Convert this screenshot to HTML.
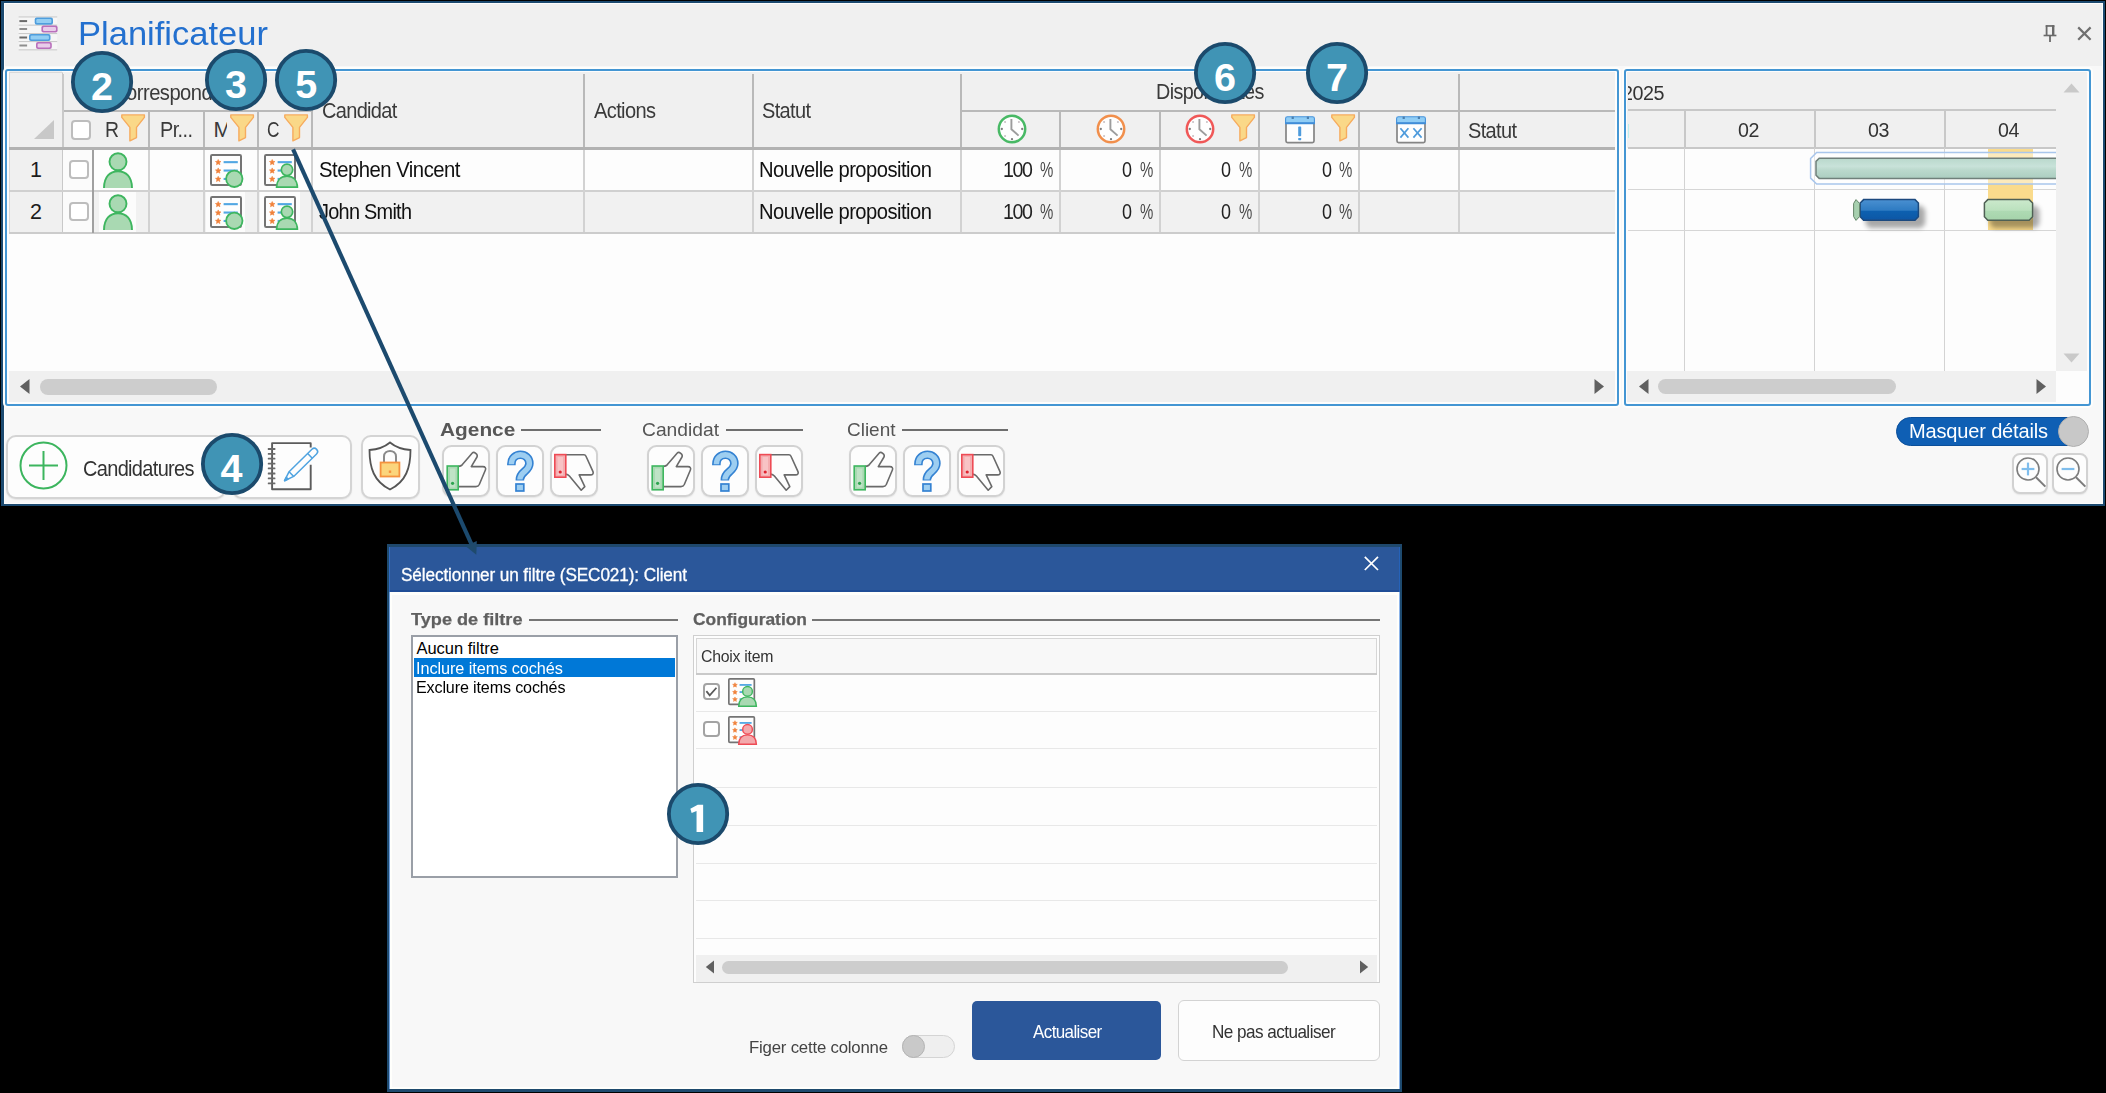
<!DOCTYPE html>
<html><head><meta charset="utf-8"><title>Planificateur</title>
<style>
html,body{margin:0;padding:0;}
body{width:2106px;height:1093px;background:#000;position:relative;overflow:hidden;font-family:"Liberation Sans",sans-serif;}
div,svg,span.t{position:absolute;box-sizing:border-box;}
span.t{white-space:pre;}
svg{overflow:visible;}
</style></head><body>
<div style="left:1px;top:1px;width:2104px;height:505px;background:#f0f0f0;border-style:solid;border-color:#1c4a70;border-width:2px 2px 2px 3px;box-shadow:inset 0 0 0 1px rgba(255,255,255,0.85);"></div>
<div style="left:5px;top:66px;width:2097px;height:437px;background:#f8f8f8;"></div>
<svg style="left:0px;top:0px;" width="70" height="60" viewBox="0 0 70 60"><rect x="18.6" y="16.4" width="38.6" height="34" fill="#f6f6f6"/><rect x="18.6" y="16.4" width="38.6" height="1.1" fill="#cbcbcb"/><rect x="18.6" y="24.6" width="38.6" height="1.1" fill="#cbcbcb"/><rect x="18.6" y="33.0" width="38.6" height="1.1" fill="#cbcbcb"/><rect x="18.6" y="41.0" width="38.6" height="1.1" fill="#cbcbcb"/><rect x="18.6" y="49.3" width="38.6" height="1.1" fill="#cbcbcb"/><rect x="19.4" y="20.1" width="7.7" height="2" fill="#6a6a6a"/><rect x="34.7" y="17.5" width="18.299999999999997" height="7.2" rx="2" fill="#4f9edd"/><rect x="36.300000000000004" y="19.1" width="15.099999999999998" height="4" rx="1.2" fill="#93cef3"/><rect x="19.4" y="28.0" width="7.7" height="2" fill="#8e8e8e"/><rect x="41.4" y="25.4" width="16.200000000000003" height="7.2" rx="2" fill="#b970bc"/><rect x="43.0" y="27.0" width="13.000000000000004" height="4" rx="1.2" fill="#e9cdea"/><rect x="19.4" y="36.5" width="7.7" height="2" fill="#6a6a6a"/><rect x="29.0" y="33.9" width="21.5" height="7.2" rx="2" fill="#4f9edd"/><rect x="30.6" y="35.5" width="18.3" height="4" rx="1.2" fill="#93cef3"/><rect x="19.4" y="44.5" width="7.7" height="2" fill="#8e8e8e"/><rect x="36.0" y="41.9" width="15.799999999999997" height="7.2" rx="2" fill="#b970bc"/><rect x="37.6" y="43.5" width="12.599999999999998" height="4" rx="1.2" fill="#e9cdea"/></svg>
<span class="t" style="left:77.50px;top:17.00px;font-size:33.5px;line-height:33.5px;color:#2370cf;transform:scaleX(1.0306);transform-origin:0 0;">Planificateur</span>
<svg style="left:2040px;top:22px;" width="20" height="24" viewBox="0 0 20 24"><path d="M6.6 3.6 L6.6 13 M12.9 3.6 L12.9 13" stroke="#6a6a6a" fill="none" stroke-width="1.8"/><rect x="5.7" y="3.1" width="8.7" height="1.7" fill="#6a6a6a"/><rect x="12" y="3.5" width="2.4" height="9.5" fill="#6a6a6a"/><rect x="3.6" y="12.7" width="12.8" height="1.6" fill="#6a6a6a"/><rect x="9.1" y="14" width="1.8" height="6" fill="#6a6a6a"/></svg>
<svg style="left:2074px;top:23px;" width="20" height="20" viewBox="0 0 20 20"><path d="M4.2 4.4 L16.6 16.8 M16.6 4.4 L4.2 16.8" stroke="#707070" stroke-width="2.2" fill="none"/></svg>
<div style="left:5px;top:69px;width:1614px;height:337px;background:#fdfdfd;border:2px solid #4496d3;border-radius:3px;box-shadow:0 0 0 2px #fefefc;"></div>
<div style="left:9px;top:72px;width:1606px;height:76px;background:#f0f0f0;"></div>
<div style="left:9px;top:71px;width:53px;height:162px;background:#f0f0f0;"></div>
<div style="left:62px;top:72px;width:1px;height:161px;background:#c9c9c9;"></div>
<div style="left:9px;top:72px;width:1px;height:161px;background:#dadada;"></div>
<div style="left:9px;top:72px;width:54px;height:1px;background:#dadada;"></div>
<svg style="left:33px;top:119px;" width="22" height="21" viewBox="0 0 22 21"><path d="M1 20 L21 20 L21 1 Z" fill="#c8c8c8"/></svg>
<div style="left:64px;top:110px;width:247px;height:2px;background:#b9b9b9;"></div>
<div style="left:960px;top:110px;width:655px;height:2px;background:#b9b9b9;"></div>
<div style="left:9px;top:147px;width:1606px;height:3px;background:#b2b2b2;"></div>
<div style="left:148px;top:112px;width:2px;height:35px;background:#b9b9b9;"></div>
<div style="left:203px;top:112px;width:2px;height:35px;background:#b9b9b9;"></div>
<div style="left:257px;top:112px;width:2px;height:35px;background:#b9b9b9;"></div>
<div style="left:311px;top:112px;width:2px;height:35px;background:#b9b9b9;"></div>
<div style="left:311px;top:74px;width:2px;height:73px;background:#b9b9b9;"></div>
<div style="left:583px;top:74px;width:2px;height:73px;background:#b9b9b9;"></div>
<div style="left:752px;top:74px;width:2px;height:73px;background:#b9b9b9;"></div>
<div style="left:960px;top:74px;width:2px;height:73px;background:#b9b9b9;"></div>
<div style="left:1458px;top:74px;width:2px;height:73px;background:#b9b9b9;"></div>
<div style="left:1059px;top:112px;width:2px;height:35px;background:#b9b9b9;"></div>
<div style="left:1159px;top:112px;width:2px;height:35px;background:#b9b9b9;"></div>
<div style="left:1258px;top:112px;width:2px;height:35px;background:#b9b9b9;"></div>
<div style="left:1358px;top:112px;width:2px;height:35px;background:#b9b9b9;"></div>
<div style="left:63px;top:74px;width:1px;height:73px;background:#c9c9c9;"></div>
<div style="left:63px;top:150px;width:1552px;height:40px;background:#fdfdfd;"></div>
<div style="left:63px;top:192px;width:1552px;height:40px;background:#f1f1f1;"></div>
<div style="left:63px;top:150px;width:29px;height:82px;background:#fbfbfb;"></div>
<div style="left:99px;top:192px;width:37px;height:40px;background:#fcfcfc;"></div>
<div style="left:206px;top:192px;width:39px;height:40px;background:#fcfcfc;"></div>
<div style="left:260px;top:192px;width:40px;height:40px;background:#fcfcfc;"></div>
<div style="left:9px;top:190px;width:1606px;height:2px;background:#d0d0d0;"></div>
<div style="left:9px;top:232px;width:1606px;height:2px;background:#cccccc;"></div>
<div style="left:148px;top:150px;width:2px;height:82px;background:#d2d2d2;"></div>
<div style="left:203px;top:150px;width:2px;height:82px;background:#d2d2d2;"></div>
<div style="left:257px;top:150px;width:2px;height:82px;background:#d2d2d2;"></div>
<div style="left:311px;top:150px;width:2px;height:82px;background:#d2d2d2;"></div>
<div style="left:583px;top:150px;width:2px;height:82px;background:#d2d2d2;"></div>
<div style="left:752px;top:150px;width:2px;height:82px;background:#d2d2d2;"></div>
<div style="left:960px;top:150px;width:2px;height:82px;background:#d2d2d2;"></div>
<div style="left:1059px;top:150px;width:2px;height:82px;background:#d2d2d2;"></div>
<div style="left:1159px;top:150px;width:2px;height:82px;background:#d2d2d2;"></div>
<div style="left:1258px;top:150px;width:2px;height:82px;background:#d2d2d2;"></div>
<div style="left:1358px;top:150px;width:2px;height:82px;background:#d2d2d2;"></div>
<div style="left:1458px;top:150px;width:2px;height:82px;background:#d2d2d2;"></div>
<div style="left:92px;top:150px;width:2px;height:83px;background:#a0a0a0;"></div>
<span class="t" style="left:30.02px;top:160.00px;font-size:21.5px;line-height:21.5px;color:#1c1c1c;">1</span>
<span class="t" style="left:30.02px;top:202.00px;font-size:21.5px;line-height:21.5px;color:#1c1c1c;">2</span>
<div style="left:70.5px;top:120px;width:20px;height:20px;background:#fff;border:2px solid #bdbdbd;border-radius:4px;"></div>
<span class="t" style="left:104.70px;top:120.00px;font-size:21.5px;line-height:21.5px;color:#3a3a3a;transform:scaleX(0.9014);transform-origin:0 0;">R</span>
<svg style="left:121px;top:114.2px;" width="24" height="27.6" viewBox="0 0 24 27.6"><path d="M0.8 0.9 L23.4 0.9 L23.4 3.4 L15.5 13.4 L15.5 23.6 L8.9 26.9 L8.9 13.4 L0.8 3.4 Z" fill="#fad888" stroke="#f6ab5e" stroke-width="1.4" stroke-linejoin="round"/></svg>
<span class="t" style="left:159.50px;top:120.00px;font-size:21.5px;line-height:21.5px;color:#3a3a3a;letter-spacing:-0.637px;transform:scaleX(0.9247);transform-origin:0 0;">Pr...</span>
<div style="left:205px;top:115px;width:22px;height:30px;overflow:hidden;"><span class="t" style="left:8.50px;top:5.00px;font-size:21.5px;line-height:21.5px;color:#3a3a3a;">M</span></div>
<svg style="left:230px;top:114.2px;" width="24" height="27.6" viewBox="0 0 24 27.6"><path d="M0.8 0.9 L23.4 0.9 L23.4 3.4 L15.5 13.4 L15.5 23.6 L8.9 26.9 L8.9 13.4 L0.8 3.4 Z" fill="#fad888" stroke="#f6ab5e" stroke-width="1.4" stroke-linejoin="round"/></svg>
<span class="t" style="left:267.30px;top:120.00px;font-size:21.5px;line-height:21.5px;color:#3a3a3a;transform:scaleX(0.8048);transform-origin:0 0;">C</span>
<svg style="left:284px;top:114.2px;" width="24" height="27.6" viewBox="0 0 24 27.6"><path d="M0.8 0.9 L23.4 0.9 L23.4 3.4 L15.5 13.4 L15.5 23.6 L8.9 26.9 L8.9 13.4 L0.8 3.4 Z" fill="#fad888" stroke="#f6ab5e" stroke-width="1.4" stroke-linejoin="round"/></svg>
<span class="t" style="left:112.00px;top:83.00px;font-size:21.5px;line-height:21.5px;color:#3a3a3a;letter-spacing:-0.569px;transform:scaleX(0.9398);transform-origin:0 0;">Correspond...</span>
<span class="t" style="left:321.50px;top:101.00px;font-size:21.5px;line-height:21.5px;color:#3a3a3a;letter-spacing:-0.744px;transform:scaleX(0.9311);transform-origin:0 0;">Candidat</span>
<span class="t" style="left:593.80px;top:101.00px;font-size:21.5px;line-height:21.5px;color:#3a3a3a;letter-spacing:-0.684px;transform:scaleX(0.9336);transform-origin:0 0;">Actions</span>
<span class="t" style="left:762.00px;top:101.00px;font-size:21.5px;line-height:21.5px;color:#3a3a3a;letter-spacing:-0.696px;transform:scaleX(0.9296);transform-origin:0 0;">Statut</span>
<span class="t" style="left:1155.70px;top:82.00px;font-size:21.5px;line-height:21.5px;color:#3a3a3a;letter-spacing:-0.691px;transform:scaleX(0.9202);transform-origin:0 0;">Disponibilités</span>
<span class="t" style="left:1468.40px;top:121.00px;font-size:21.5px;line-height:21.5px;color:#3a3a3a;letter-spacing:-0.696px;transform:scaleX(0.9296);transform-origin:0 0;">Statut</span>
<svg style="left:995.8px;top:112.80000000000001px;" width="32" height="32" viewBox="0 0 32 32"><circle cx="16" cy="16" r="13.2" fill="#fefefe" stroke="#48b965" stroke-width="2.5"/><path d="M15.4 6 L15.4 16.2 L22.6 22.6" fill="none" stroke="#9c9c9c" stroke-width="1.9" stroke-linejoin="round"/><circle cx="22.93" cy="9.07" r="1.05" fill="#c8c0c4"/><circle cx="26.20" cy="16.00" r="1.15" fill="#7f7f7f"/><circle cx="16.00" cy="26.20" r="1.15" fill="#7f7f7f"/><circle cx="9.07" cy="22.93" r="1.05" fill="#c8c0c4"/><circle cx="5.80" cy="16.00" r="1.15" fill="#7f7f7f"/><circle cx="9.07" cy="9.07" r="1.05" fill="#c8c0c4"/></svg>
<svg style="left:1095.2px;top:112.80000000000001px;" width="32" height="32" viewBox="0 0 32 32"><circle cx="16" cy="16" r="13.2" fill="#fefefe" stroke="#f18f4c" stroke-width="2.5"/><path d="M15.4 6 L15.4 16.2 L22.6 22.6" fill="none" stroke="#9c9c9c" stroke-width="1.9" stroke-linejoin="round"/><circle cx="22.93" cy="9.07" r="1.05" fill="#c8c0c4"/><circle cx="26.20" cy="16.00" r="1.15" fill="#7f7f7f"/><circle cx="16.00" cy="26.20" r="1.15" fill="#7f7f7f"/><circle cx="9.07" cy="22.93" r="1.05" fill="#c8c0c4"/><circle cx="5.80" cy="16.00" r="1.15" fill="#7f7f7f"/><circle cx="9.07" cy="9.07" r="1.05" fill="#c8c0c4"/></svg>
<svg style="left:1183.8px;top:112.80000000000001px;" width="32" height="32" viewBox="0 0 32 32"><circle cx="16" cy="16" r="13.2" fill="#fefefe" stroke="#f05858" stroke-width="2.5"/><path d="M15.4 6 L15.4 16.2 L22.6 22.6" fill="none" stroke="#9c9c9c" stroke-width="1.9" stroke-linejoin="round"/><circle cx="22.93" cy="9.07" r="1.05" fill="#c8c0c4"/><circle cx="26.20" cy="16.00" r="1.15" fill="#7f7f7f"/><circle cx="16.00" cy="26.20" r="1.15" fill="#7f7f7f"/><circle cx="9.07" cy="22.93" r="1.05" fill="#c8c0c4"/><circle cx="5.80" cy="16.00" r="1.15" fill="#7f7f7f"/><circle cx="9.07" cy="9.07" r="1.05" fill="#c8c0c4"/></svg>
<svg style="left:1231px;top:114.2px;" width="24" height="27.6" viewBox="0 0 24 27.6"><path d="M0.8 0.9 L23.4 0.9 L23.4 3.4 L15.5 13.4 L15.5 23.6 L8.9 26.9 L8.9 13.4 L0.8 3.4 Z" fill="#fad888" stroke="#f6ab5e" stroke-width="1.4" stroke-linejoin="round"/></svg>
<svg style="left:1284.9px;top:115.7px;" width="30" height="28" viewBox="0 0 30 28"><path d="M1 4 L1 25 Q1 26.6 2.6 26.6 L27.4 26.6 Q29 26.6 29 25 L29 4 Z" fill="#fefefe" stroke="#858585" stroke-width="1.7"/><path d="M0.6 7.6 L0.6 2.6 Q0.6 0.8 2.4 0.8 L27.6 0.8 Q29.4 0.8 29.4 2.6 L29.4 7.6 Z" fill="#90cdf5" stroke="#4593dc" stroke-width="1.1"/><rect x="0.6" y="6.2" width="28.8" height="1.5" fill="#3f8ad6"/><rect x="6.6" y="0.6" width="2.2" height="2.4" fill="#4a7fb0"/><rect x="21.8" y="0.6" width="2.2" height="2.4" fill="#4a7fb0"/><rect x="13.2" y="10.6" width="3" height="9.6" rx="0.8" fill="#4e9bdc"/><rect x="13.2" y="22" width="3" height="2.2" rx="0.6" fill="#4e9bdc"/></svg>
<svg style="left:1330.6px;top:114.2px;" width="24" height="27.6" viewBox="0 0 24 27.6"><path d="M0.8 0.9 L23.4 0.9 L23.4 3.4 L15.5 13.4 L15.5 23.6 L8.9 26.9 L8.9 13.4 L0.8 3.4 Z" fill="#fad888" stroke="#f6ab5e" stroke-width="1.4" stroke-linejoin="round"/></svg>
<svg style="left:1395.5px;top:115.7px;" width="30" height="28" viewBox="0 0 30 28"><path d="M1 4 L1 25 Q1 26.6 2.6 26.6 L27.4 26.6 Q29 26.6 29 25 L29 4 Z" fill="#fefefe" stroke="#858585" stroke-width="1.7"/><path d="M0.6 7.6 L0.6 2.6 Q0.6 0.8 2.4 0.8 L27.6 0.8 Q29.4 0.8 29.4 2.6 L29.4 7.6 Z" fill="#90cdf5" stroke="#4593dc" stroke-width="1.1"/><rect x="0.6" y="6.2" width="28.8" height="1.5" fill="#3f8ad6"/><rect x="6.6" y="0.6" width="2.2" height="2.4" fill="#4a7fb0"/><rect x="21.8" y="0.6" width="2.2" height="2.4" fill="#4a7fb0"/><path d="M4.4 12.2 L12.4 21.6 M12.4 12.2 L4.4 21.6 M17.4 12.2 L25.6 21.6 M25.6 12.2 L17.4 21.6" stroke="#4e9bdc" stroke-width="1.7" fill="none"/></svg>
<div style="left:69px;top:159.5px;width:19.5px;height:19.5px;background:#fff;border:2px solid #bdbdbd;border-radius:4px;"></div>
<svg style="left:102.7px;top:151.5px;overflow:hidden;" width="30.0" height="36.0" viewBox="0 0 30 36"><circle cx="15" cy="9.8" r="8.5" fill="#a9d9b2" stroke="#3eb65f" stroke-width="1.9"/><path d="M1 36 C1 25 7 19.2 15 19.2 C23 19.2 29 25 29 36 Z" fill="#a9d9b2"/><path d="M1 36 C1 25 7 19.2 15 19.2 C23 19.2 29 25 29 36" fill="none" stroke="#3eb65f" stroke-width="1.9"/></svg>
<svg style="left:209.7px;top:153.8px;" width="34.0" height="34.0" viewBox="0 0 34 34"><rect x="1" y="1" width="30" height="30" rx="1.2" fill="#fdfdfd" stroke="#747474" stroke-width="2"/><path d="M8.20 5.50 L8.99 7.31 L10.96 7.50 L9.48 8.82 L9.90 10.75 L8.20 9.75 L6.50 10.75 L6.92 8.82 L5.44 7.50 L7.41 7.31 Z" fill="#f0813a" stroke="#f0813a" stroke-width="0.6" stroke-linejoin="round"/><rect x="13.6" y="7.1" width="14.2" height="2.1" fill="#52a7e3"/><path d="M8.20 13.90 L8.99 15.71 L10.96 15.90 L9.48 17.22 L9.90 19.15 L8.20 18.15 L6.50 19.15 L6.92 17.22 L5.44 15.90 L7.41 15.71 Z" fill="#f0813a" stroke="#f0813a" stroke-width="0.6" stroke-linejoin="round"/><rect x="13.6" y="15.500000000000002" width="14.2" height="2.1" fill="#52a7e3"/><path d="M8.20 22.30 L8.99 24.11 L10.96 24.30 L9.48 25.62 L9.90 27.55 L8.20 26.55 L6.50 27.55 L6.92 25.62 L5.44 24.30 L7.41 24.11 Z" fill="#f0813a" stroke="#f0813a" stroke-width="0.6" stroke-linejoin="round"/><rect x="13.6" y="23.9" width="14.2" height="2.1" fill="#52a7e3"/><circle cx="24.3" cy="24.8" r="8.2" fill="#a9d9b2" stroke="#3eb65f" stroke-width="1.8"/></svg>
<svg style="left:263.8px;top:153.8px;" width="34.0" height="34.0" viewBox="0 0 34 34"><rect x="1" y="1" width="30" height="30" rx="1.2" fill="#fdfdfd" stroke="#747474" stroke-width="2"/><path d="M8.20 5.50 L8.99 7.31 L10.96 7.50 L9.48 8.82 L9.90 10.75 L8.20 9.75 L6.50 10.75 L6.92 8.82 L5.44 7.50 L7.41 7.31 Z" fill="#f0813a" stroke="#f0813a" stroke-width="0.6" stroke-linejoin="round"/><rect x="13.6" y="7.1" width="14.2" height="2.1" fill="#52a7e3"/><path d="M8.20 13.90 L8.99 15.71 L10.96 15.90 L9.48 17.22 L9.90 19.15 L8.20 18.15 L6.50 19.15 L6.92 17.22 L5.44 15.90 L7.41 15.71 Z" fill="#f0813a" stroke="#f0813a" stroke-width="0.6" stroke-linejoin="round"/><rect x="13.6" y="15.500000000000002" width="14.2" height="2.1" fill="#52a7e3"/><path d="M8.20 22.30 L8.99 24.11 L10.96 24.30 L9.48 25.62 L9.90 27.55 L8.20 26.55 L6.50 27.55 L6.92 25.62 L5.44 24.30 L7.41 24.11 Z" fill="#f0813a" stroke="#f0813a" stroke-width="0.6" stroke-linejoin="round"/><rect x="13.6" y="23.9" width="14.2" height="2.1" fill="#52a7e3"/><circle cx="23" cy="15.8" r="5.7" fill="#a9d9b2" stroke="#3eb65f" stroke-width="1.7"/><path d="M12.6 33.2 C12.8 26 17 22.2 23 22.2 C29 22.2 33.2 26 33.4 33.2 Z" fill="#a9d9b2" stroke="#3eb65f" stroke-width="1.7"/></svg>
<span class="t" style="left:319.00px;top:160.00px;font-size:21.5px;line-height:21.5px;color:#111;letter-spacing:-0.541px;transform:scaleX(0.9444);transform-origin:0 0;">Stephen Vincent</span>
<span class="t" style="left:758.50px;top:160.00px;font-size:21.5px;line-height:21.5px;color:#111;letter-spacing:-0.551px;transform:scaleX(0.9384);transform-origin:0 0;">Nouvelle proposition</span>
<span class="t" style="left:1039.90px;top:160.00px;font-size:21.5px;line-height:21.5px;color:#4a4a4a;transform:scaleX(0.6954);transform-origin:0 0;">%</span>
<span class="t" style="left:1002.70px;top:160.00px;font-size:21.5px;line-height:21.5px;color:#222;letter-spacing:-1.453px;transform:scaleX(0.9099);transform-origin:0 0;">100</span>
<span class="t" style="left:1139.50px;top:160.00px;font-size:21.5px;line-height:21.5px;color:#4a4a4a;transform:scaleX(0.6954);transform-origin:0 0;">%</span>
<span class="t" style="left:1122.30px;top:160.00px;font-size:21.5px;line-height:21.5px;color:#222;transform:scaleX(0.8355);transform-origin:0 0;">0</span>
<span class="t" style="left:1238.50px;top:160.00px;font-size:21.5px;line-height:21.5px;color:#4a4a4a;transform:scaleX(0.6954);transform-origin:0 0;">%</span>
<span class="t" style="left:1221.30px;top:160.00px;font-size:21.5px;line-height:21.5px;color:#222;transform:scaleX(0.8355);transform-origin:0 0;">0</span>
<span class="t" style="left:1339.10px;top:160.00px;font-size:21.5px;line-height:21.5px;color:#4a4a4a;transform:scaleX(0.6954);transform-origin:0 0;">%</span>
<span class="t" style="left:1321.90px;top:160.00px;font-size:21.5px;line-height:21.5px;color:#222;transform:scaleX(0.8355);transform-origin:0 0;">0</span>
<div style="left:69px;top:201.5px;width:19.5px;height:19.5px;background:#fff;border:2px solid #bdbdbd;border-radius:4px;"></div>
<svg style="left:102.7px;top:193.5px;overflow:hidden;" width="30.0" height="36.0" viewBox="0 0 30 36"><circle cx="15" cy="9.8" r="8.5" fill="#a9d9b2" stroke="#3eb65f" stroke-width="1.9"/><path d="M1 36 C1 25 7 19.2 15 19.2 C23 19.2 29 25 29 36 Z" fill="#a9d9b2"/><path d="M1 36 C1 25 7 19.2 15 19.2 C23 19.2 29 25 29 36" fill="none" stroke="#3eb65f" stroke-width="1.9"/></svg>
<svg style="left:209.7px;top:195.8px;" width="34.0" height="34.0" viewBox="0 0 34 34"><rect x="1" y="1" width="30" height="30" rx="1.2" fill="#fdfdfd" stroke="#747474" stroke-width="2"/><path d="M8.20 5.50 L8.99 7.31 L10.96 7.50 L9.48 8.82 L9.90 10.75 L8.20 9.75 L6.50 10.75 L6.92 8.82 L5.44 7.50 L7.41 7.31 Z" fill="#f0813a" stroke="#f0813a" stroke-width="0.6" stroke-linejoin="round"/><rect x="13.6" y="7.1" width="14.2" height="2.1" fill="#52a7e3"/><path d="M8.20 13.90 L8.99 15.71 L10.96 15.90 L9.48 17.22 L9.90 19.15 L8.20 18.15 L6.50 19.15 L6.92 17.22 L5.44 15.90 L7.41 15.71 Z" fill="#f0813a" stroke="#f0813a" stroke-width="0.6" stroke-linejoin="round"/><rect x="13.6" y="15.500000000000002" width="14.2" height="2.1" fill="#52a7e3"/><path d="M8.20 22.30 L8.99 24.11 L10.96 24.30 L9.48 25.62 L9.90 27.55 L8.20 26.55 L6.50 27.55 L6.92 25.62 L5.44 24.30 L7.41 24.11 Z" fill="#f0813a" stroke="#f0813a" stroke-width="0.6" stroke-linejoin="round"/><rect x="13.6" y="23.9" width="14.2" height="2.1" fill="#52a7e3"/><circle cx="24.3" cy="24.8" r="8.2" fill="#a9d9b2" stroke="#3eb65f" stroke-width="1.8"/></svg>
<svg style="left:263.8px;top:195.8px;" width="34.0" height="34.0" viewBox="0 0 34 34"><rect x="1" y="1" width="30" height="30" rx="1.2" fill="#fdfdfd" stroke="#747474" stroke-width="2"/><path d="M8.20 5.50 L8.99 7.31 L10.96 7.50 L9.48 8.82 L9.90 10.75 L8.20 9.75 L6.50 10.75 L6.92 8.82 L5.44 7.50 L7.41 7.31 Z" fill="#f0813a" stroke="#f0813a" stroke-width="0.6" stroke-linejoin="round"/><rect x="13.6" y="7.1" width="14.2" height="2.1" fill="#52a7e3"/><path d="M8.20 13.90 L8.99 15.71 L10.96 15.90 L9.48 17.22 L9.90 19.15 L8.20 18.15 L6.50 19.15 L6.92 17.22 L5.44 15.90 L7.41 15.71 Z" fill="#f0813a" stroke="#f0813a" stroke-width="0.6" stroke-linejoin="round"/><rect x="13.6" y="15.500000000000002" width="14.2" height="2.1" fill="#52a7e3"/><path d="M8.20 22.30 L8.99 24.11 L10.96 24.30 L9.48 25.62 L9.90 27.55 L8.20 26.55 L6.50 27.55 L6.92 25.62 L5.44 24.30 L7.41 24.11 Z" fill="#f0813a" stroke="#f0813a" stroke-width="0.6" stroke-linejoin="round"/><rect x="13.6" y="23.9" width="14.2" height="2.1" fill="#52a7e3"/><circle cx="23" cy="15.8" r="5.7" fill="#a9d9b2" stroke="#3eb65f" stroke-width="1.7"/><path d="M12.6 33.2 C12.8 26 17 22.2 23 22.2 C29 22.2 33.2 26 33.4 33.2 Z" fill="#a9d9b2" stroke="#3eb65f" stroke-width="1.7"/></svg>
<span class="t" style="left:319.00px;top:202.00px;font-size:21.5px;line-height:21.5px;color:#111;letter-spacing:-0.787px;transform:scaleX(0.9255);transform-origin:0 0;">John Smith</span>
<span class="t" style="left:758.50px;top:202.00px;font-size:21.5px;line-height:21.5px;color:#111;letter-spacing:-0.551px;transform:scaleX(0.9384);transform-origin:0 0;">Nouvelle proposition</span>
<span class="t" style="left:1039.90px;top:202.00px;font-size:21.5px;line-height:21.5px;color:#4a4a4a;transform:scaleX(0.6954);transform-origin:0 0;">%</span>
<span class="t" style="left:1002.70px;top:202.00px;font-size:21.5px;line-height:21.5px;color:#222;letter-spacing:-1.453px;transform:scaleX(0.9099);transform-origin:0 0;">100</span>
<span class="t" style="left:1139.50px;top:202.00px;font-size:21.5px;line-height:21.5px;color:#4a4a4a;transform:scaleX(0.6954);transform-origin:0 0;">%</span>
<span class="t" style="left:1122.30px;top:202.00px;font-size:21.5px;line-height:21.5px;color:#222;transform:scaleX(0.8355);transform-origin:0 0;">0</span>
<span class="t" style="left:1238.50px;top:202.00px;font-size:21.5px;line-height:21.5px;color:#4a4a4a;transform:scaleX(0.6954);transform-origin:0 0;">%</span>
<span class="t" style="left:1221.30px;top:202.00px;font-size:21.5px;line-height:21.5px;color:#222;transform:scaleX(0.8355);transform-origin:0 0;">0</span>
<span class="t" style="left:1339.10px;top:202.00px;font-size:21.5px;line-height:21.5px;color:#4a4a4a;transform:scaleX(0.6954);transform-origin:0 0;">%</span>
<span class="t" style="left:1321.90px;top:202.00px;font-size:21.5px;line-height:21.5px;color:#222;transform:scaleX(0.8355);transform-origin:0 0;">0</span>
<div style="left:9px;top:371px;width:1606px;height:31px;background:#f0f0f0;"></div>
<svg style="left:19px;top:378px;" width="12" height="17" viewBox="0 0 12 17"><path d="M10.5 1 L10.5 16 L1 8.5 Z" fill="#606060"/></svg>
<div style="left:40px;top:379px;width:177px;height:15.5px;background:#cdcdcd;border-radius:8px;"></div>
<svg style="left:1593px;top:378px;" width="12" height="17" viewBox="0 0 12 17"><path d="M1.5 1 L1.5 16 L11 8.5 Z" fill="#606060"/></svg>
<div style="left:1624px;top:69px;width:467px;height:337px;background:#fdfdfd;border:2px solid #4496d3;border-radius:3px;box-shadow:0 0 0 2px #fefefc;"></div>
<div style="left:1627px;top:72px;width:460px;height:76px;background:#f0f0f0;"></div>
<div style="left:2056px;top:72px;width:31px;height:299px;background:#f0f0f0;"></div>
<div style="left:1627px;top:371px;width:429px;height:31px;background:#f0f0f0;"></div>
<div style="left:1628px;top:109px;width:428px;height:1.6px;background:#c8c8c8;"></div>
<div style="left:1628px;top:147px;width:428px;height:1.6px;background:#c8c8c8;"></div>
<div style="left:1684px;top:111px;width:1px;height:260px;background:#d3d3d3;"></div>
<div style="left:1684px;top:111px;width:1.6px;height:37px;background:#c8c8c8;"></div>
<div style="left:1814px;top:111px;width:1px;height:260px;background:#d3d3d3;"></div>
<div style="left:1814px;top:111px;width:1.6px;height:37px;background:#c8c8c8;"></div>
<div style="left:1944px;top:111px;width:1px;height:260px;background:#d3d3d3;"></div>
<div style="left:1944px;top:111px;width:1.6px;height:37px;background:#c8c8c8;"></div>
<div style="left:1628px;top:189px;width:428px;height:1px;background:#d6d6d6;"></div>
<div style="left:1628px;top:230px;width:428px;height:1px;background:#d6d6d6;"></div>
<div style="left:1628px;top:80px;width:60px;height:26px;overflow:hidden;"><span class="t" style="left:-1.00px;top:3.00px;font-size:20.5px;line-height:20.5px;color:#333;letter-spacing:-0.485px;transform:scaleX(0.9625);transform-origin:0 0;margin-left:-4.8px;">2025</span></div>
<span class="t" style="left:1737.75px;top:120.00px;font-size:20px;line-height:20px;color:#333;letter-spacing:-0.344px;transform:scaleX(0.9815);transform-origin:0 0;">02</span>
<span class="t" style="left:1867.75px;top:120.00px;font-size:20px;line-height:20px;color:#333;letter-spacing:-0.344px;transform:scaleX(0.9815);transform-origin:0 0;">03</span>
<span class="t" style="left:1998.45px;top:120.00px;font-size:20px;line-height:20px;color:#333;letter-spacing:-0.344px;transform:scaleX(0.9815);transform-origin:0 0;">04</span>
<div style="left:1627.6px;top:123.5px;width:1.6px;height:14px;background:#bdeeee;"></div>
<div style="left:1988px;top:149px;width:45px;height:81px;background:#fadb8c;"></div>
<svg style="left:1626px;top:149px;overflow:hidden;" width="430" height="222" viewBox="0 0 430 222"><defs><linearGradient id="gBig" x1="0" y1="0" x2="0" y2="1"><stop offset="0" stop-color="#b9d8cc"/><stop offset="0.4" stop-color="#c8e2d9"/><stop offset="0.6" stop-color="#bad8cc"/><stop offset="1" stop-color="#abcdc0"/></linearGradient><linearGradient id="gBlue" x1="0" y1="0" x2="0" y2="1"><stop offset="0" stop-color="#4a90d1"/><stop offset="0.52" stop-color="#2e7bc2"/><stop offset="0.56" stop-color="#0f60b0"/><stop offset="1" stop-color="#0a57a5"/></linearGradient><linearGradient id="gGreen" x1="0" y1="0" x2="0" y2="1"><stop offset="0" stop-color="#cbe9cc"/><stop offset="0.52" stop-color="#bbe1be"/><stop offset="0.56" stop-color="#aedab3"/><stop offset="1" stop-color="#a5d3aa"/></linearGradient><filter id="sh" x="-20%" y="-40%" width="150%" height="220%"><feGaussianBlur in="SourceAlpha" stdDeviation="2.4"/><feOffset dx="5.5" dy="6.5"/><feComponentTransfer><feFuncA type="linear" slope="0.34"/></feComponentTransfer><feMerge><feMergeNode/><feMergeNode in="SourceGraphic"/></feMerge></filter></defs><path d="M190.6 3.5 L498.6 3.5 L504.6 9.5 L504.6 29.1 L498.6 35.1 L190.6 35.1 L184.6 29.1 L184.6 9.5 Z" fill="rgba(255,255,255,0.42)" stroke="#a9c6ec" stroke-width="1.5"/><path d="M193.2 9.2 L506.8 9.2 L510 12.399999999999999 L510 26.2 L506.8 29.4 L193.2 29.4 L190 26.2 L190 12.399999999999999 Z" fill="url(#gBig)" stroke="#6f7f7a" stroke-width="1.5"/><g filter="url(#sh)"><path d="M237.6 50.6 L289.0 50.6 L292.4 54.0 L292.4 67.8 L289.0 71.2 L237.6 71.2 L234.2 67.8 L234.2 54.0 Z" fill="url(#gBlue)" stroke="#1b4a7e" stroke-width="1.5"/></g><path d="M230 50.6 L233.6 54.5 L233.6 67.5 L230 71.4 L227.6 67.5 L227.6 54.5 Z" fill="#a7d0af" stroke="#648569" stroke-width="1"/><g filter="url(#sh)"><path d="M361.79999999999995 50.6 L403.2 50.6 L406.59999999999997 54.0 L406.59999999999997 67.8 L403.2 71.2 L361.79999999999995 71.2 L358.4 67.8 L358.4 54.0 Z" fill="url(#gGreen)" stroke="#4f6054" stroke-width="1.5"/></g></svg>
<svg style="left:2063px;top:83px;" width="17" height="10" viewBox="0 0 17 10"><path d="M0.5 9.5 L16.5 9.5 L8.5 0.5 Z" fill="#c9c9c9"/></svg>
<svg style="left:2063px;top:352.5px;" width="17" height="10" viewBox="0 0 17 10"><path d="M0.5 0.5 L16.5 0.5 L8.5 9.5 Z" fill="#c9c9c9"/></svg>
<svg style="left:1637.5px;top:378px;" width="12" height="17" viewBox="0 0 12 17"><path d="M10.5 1 L10.5 16 L1 8.5 Z" fill="#606060"/></svg>
<div style="left:1658px;top:378.8px;width:237.5px;height:15.5px;background:#cdcdcd;border-radius:8px;"></div>
<svg style="left:2034.5px;top:378px;" width="12" height="17" viewBox="0 0 12 17"><path d="M1.5 1 L1.5 16 L11 8.5 Z" fill="#606060"/></svg>
<div style="left:6px;top:435px;width:220px;height:64px;background:#fdfdfd;border:2px solid #d4d4d4;border-radius:10px;box-shadow:0 1px 1.5px rgba(0,0,0,0.08);"></div>
<div style="left:232px;top:435px;width:120px;height:64px;background:#fdfdfd;border:2px solid #d4d4d4;border-radius:10px;box-shadow:0 1px 1.5px rgba(0,0,0,0.08);"></div>
<div style="left:360.5px;top:435px;width:59.5px;height:64px;background:#fdfdfd;border:2px solid #d4d4d4;border-radius:10px;box-shadow:0 1px 1.5px rgba(0,0,0,0.08);"></div>
<svg style="left:19px;top:440.5px;" width="49" height="49" viewBox="0 0 49 49"><circle cx="24.5" cy="24.5" r="23" fill="none" stroke="#3cb55e" stroke-width="2"/><path d="M10 24.5 L39 24.5 M24.5 10 L24.5 39" stroke="#3cb55e" stroke-width="2" fill="none"/></svg>
<span class="t" style="left:82.60px;top:459.00px;font-size:21.5px;line-height:21.5px;color:#333;letter-spacing:-0.721px;transform:scaleX(0.9295);transform-origin:0 0;">Candidatures</span>
<svg style="left:0px;top:0px;" width="330" height="500" viewBox="0 0 330 500"><path d="M310.7 447.6 L310.7 443.1 L272.1 443.1 L272.1 489.2 L310.7 489.2 L310.7 464.8" fill="#fdfdfd" stroke="#5c5c5c" stroke-width="1.9" stroke-linejoin="round"/><rect x="267.8" y="448.10" width="7.6" height="1.8" rx="0.5" fill="#6a6a6a"/><rect x="267.8" y="452.95" width="7.6" height="1.8" rx="0.5" fill="#6a6a6a"/><rect x="267.8" y="457.80" width="7.6" height="1.8" rx="0.5" fill="#6a6a6a"/><rect x="267.8" y="462.65" width="7.6" height="1.8" rx="0.5" fill="#6a6a6a"/><rect x="267.8" y="467.50" width="7.6" height="1.8" rx="0.5" fill="#6a6a6a"/><rect x="267.8" y="472.60" width="7.6" height="1.8" rx="0.5" fill="#6a6a6a"/><rect x="267.8" y="477.50" width="7.6" height="1.8" rx="0.5" fill="#6a6a6a"/><rect x="267.8" y="482.40" width="7.6" height="1.8" rx="0.5" fill="#6a6a6a"/><g transform="translate(284.6 480.7) rotate(-44.4)" fill="#fdfdfd" stroke="#4fa3e0" stroke-width="1.5" stroke-linejoin="round"><path d="M0 0 L9.5 -3.3 L41.5 -3.3 A3.3 3.3 0 0 1 41.5 3.3 L9.5 3.3 Z"/><path d="M9.5 -3.3 L9.5 3.3 M35.5 -3.3 L35.5 3.3" fill="none"/><path d="M0 0 L3.6 -1.25 L3.6 1.25 Z" fill="#4fa3e0"/></g></svg>
<svg style="left:368px;top:441px;" width="44" height="50" viewBox="0 0 44 50"><path d="M22 1.5 C28 6.5 35 8.5 42.5 9 C42.5 27 38 40.5 22 48.5 C6 40.5 1.5 27 1.5 9 C9 8.5 16 6.5 22 1.5 Z" fill="#fdfdfd" stroke="#555" stroke-width="1.8"/><path d="M16 22 L16 15.5 C16 8 28 8 28 15.5 L28 22" fill="none" stroke="#8a8a8a" stroke-width="2"/><rect x="12.6" y="21.5" width="18.8" height="14" fill="#fbd57c" stroke="#f5923e" stroke-width="1.8"/><rect x="20.8" y="29.5" width="2.4" height="2.4" fill="#f5923e"/></svg>
<span class="t" style="left:440.00px;top:420.00px;font-size:19.2px;line-height:19.2px;color:#575757;font-weight:bold;transform:scaleX(1.0864);transform-origin:0 0;">Agence</span>
<div style="left:521px;top:428.7px;width:80px;height:2px;background:#6e6e6e;"></div>
<div style="left:442.0px;top:445.3px;width:48.2px;height:52px;background:#fdfdfd;border:2px solid #d2d2d2;border-radius:9.5px;box-shadow:0 1px 1.5px rgba(0,0,0,0.08);"></div>
<svg style="left:442.0px;top:445.3px;" width="48.2" height="52" viewBox="0 0 48.2 52"><path d="M16.5 21.4 C18.5 21.2 19.5 20.6 20.4 19.6 L30.3 8 C32 6.2 36.3 9.2 35 12 L29.3 21.6 L41 21.6 C43.2 21.6 44.2 23.2 43.4 25 L37.3 39.5 C36.6 41 35.4 41.6 33.8 41.6 L16.5 41.6" fill="#fdfdfd" stroke="#6a6a6a" stroke-width="1.6" stroke-linejoin="round"/><rect x="5.2" y="21" width="11" height="23.8" fill="#a9d9b2" stroke="#3eb65f" stroke-width="1.6"/><rect x="8" y="23.5" width="5.4" height="19" fill="#bfe3c6"/><circle cx="10.6" cy="38.3" r="1.6" fill="#2ea44f"/></svg>
<div style="left:496.1px;top:445.3px;width:48.2px;height:52px;background:#fdfdfd;border:2px solid #d2d2d2;border-radius:9.5px;box-shadow:0 1px 1.5px rgba(0,0,0,0.08);"></div>
<svg style="left:496.1px;top:445.3px;" width="48.2" height="52" viewBox="0 0 48.2 52"><path d="M15.4 20.2 L15.4 19 C15.4 6.8 33.4 6.8 33.4 18.6 C33.4 26.5 23.9 26.2 23.9 34.6 L23.9 35.6" fill="none" stroke="#3482d2" stroke-width="8.6"/><path d="M15.4 19.2 L15.4 19 C15.4 6.8 33.4 6.8 33.4 18.6 C33.4 26.5 23.9 26.2 23.9 34.6" fill="none" stroke="#9dcef1" stroke-width="5.4"/><rect x="20" y="39" width="7.8" height="7" fill="#9dcef1" stroke="#3482d2" stroke-width="1.7"/></svg>
<div style="left:550.3px;top:445.3px;width:48.2px;height:52px;background:#fdfdfd;border:2px solid #d2d2d2;border-radius:9.5px;box-shadow:0 1px 1.5px rgba(0,0,0,0.08);"></div>
<svg style="left:550.3px;top:445.3px;" width="48.2" height="52" viewBox="0 0 48.2 52"><path d="M15.7 9.8 L34 9.8 C35 9.8 35.6 10.3 36 11.2 L43 26.6 C43.8 28.6 42.6 29.9 40.6 29.9 L29.2 29.9 L34.8 41.6 L31.2 45.2 L19.4 31 C18.4 29.9 17.2 29.3 15.7 29.1" fill="#fdfdfd" stroke="#6a6a6a" stroke-width="1.6" stroke-linejoin="round"/><rect x="4.8" y="9.6" width="11" height="22.6" fill="#f4adb0" stroke="#ee4b55" stroke-width="1.6"/><rect x="7.6" y="12" width="5.4" height="18" fill="#f8c3c5"/><circle cx="10.2" cy="27" r="1.6" fill="#e0232e"/></svg>
<span class="t" style="left:642.30px;top:421.00px;font-size:18.5px;line-height:18.5px;color:#555;transform:scaleX(1.0397);transform-origin:0 0;">Candidat</span>
<div style="left:726px;top:428.7px;width:77.20000000000005px;height:2px;background:#6e6e6e;"></div>
<div style="left:646.6px;top:445.3px;width:48.2px;height:52px;background:#fdfdfd;border:2px solid #d2d2d2;border-radius:9.5px;box-shadow:0 1px 1.5px rgba(0,0,0,0.08);"></div>
<svg style="left:646.6px;top:445.3px;" width="48.2" height="52" viewBox="0 0 48.2 52"><path d="M16.5 21.4 C18.5 21.2 19.5 20.6 20.4 19.6 L30.3 8 C32 6.2 36.3 9.2 35 12 L29.3 21.6 L41 21.6 C43.2 21.6 44.2 23.2 43.4 25 L37.3 39.5 C36.6 41 35.4 41.6 33.8 41.6 L16.5 41.6" fill="#fdfdfd" stroke="#6a6a6a" stroke-width="1.6" stroke-linejoin="round"/><rect x="5.2" y="21" width="11" height="23.8" fill="#a9d9b2" stroke="#3eb65f" stroke-width="1.6"/><rect x="8" y="23.5" width="5.4" height="19" fill="#bfe3c6"/><circle cx="10.6" cy="38.3" r="1.6" fill="#2ea44f"/></svg>
<div style="left:700.7px;top:445.3px;width:48.2px;height:52px;background:#fdfdfd;border:2px solid #d2d2d2;border-radius:9.5px;box-shadow:0 1px 1.5px rgba(0,0,0,0.08);"></div>
<svg style="left:700.7px;top:445.3px;" width="48.2" height="52" viewBox="0 0 48.2 52"><path d="M15.4 20.2 L15.4 19 C15.4 6.8 33.4 6.8 33.4 18.6 C33.4 26.5 23.9 26.2 23.9 34.6 L23.9 35.6" fill="none" stroke="#3482d2" stroke-width="8.6"/><path d="M15.4 19.2 L15.4 19 C15.4 6.8 33.4 6.8 33.4 18.6 C33.4 26.5 23.9 26.2 23.9 34.6" fill="none" stroke="#9dcef1" stroke-width="5.4"/><rect x="20" y="39" width="7.8" height="7" fill="#9dcef1" stroke="#3482d2" stroke-width="1.7"/></svg>
<div style="left:754.9px;top:445.3px;width:48.2px;height:52px;background:#fdfdfd;border:2px solid #d2d2d2;border-radius:9.5px;box-shadow:0 1px 1.5px rgba(0,0,0,0.08);"></div>
<svg style="left:754.9px;top:445.3px;" width="48.2" height="52" viewBox="0 0 48.2 52"><path d="M15.7 9.8 L34 9.8 C35 9.8 35.6 10.3 36 11.2 L43 26.6 C43.8 28.6 42.6 29.9 40.6 29.9 L29.2 29.9 L34.8 41.6 L31.2 45.2 L19.4 31 C18.4 29.9 17.2 29.3 15.7 29.1" fill="#fdfdfd" stroke="#6a6a6a" stroke-width="1.6" stroke-linejoin="round"/><rect x="4.8" y="9.6" width="11" height="22.6" fill="#f4adb0" stroke="#ee4b55" stroke-width="1.6"/><rect x="7.6" y="12" width="5.4" height="18" fill="#f8c3c5"/><circle cx="10.2" cy="27" r="1.6" fill="#e0232e"/></svg>
<span class="t" style="left:846.50px;top:421.00px;font-size:18.5px;line-height:18.5px;color:#555;transform:scaleX(1.0251);transform-origin:0 0;">Client</span>
<div style="left:901.6px;top:428.7px;width:106.39999999999998px;height:2px;background:#6e6e6e;"></div>
<div style="left:848.8px;top:445.3px;width:48.2px;height:52px;background:#fdfdfd;border:2px solid #d2d2d2;border-radius:9.5px;box-shadow:0 1px 1.5px rgba(0,0,0,0.08);"></div>
<svg style="left:848.8px;top:445.3px;" width="48.2" height="52" viewBox="0 0 48.2 52"><path d="M16.5 21.4 C18.5 21.2 19.5 20.6 20.4 19.6 L30.3 8 C32 6.2 36.3 9.2 35 12 L29.3 21.6 L41 21.6 C43.2 21.6 44.2 23.2 43.4 25 L37.3 39.5 C36.6 41 35.4 41.6 33.8 41.6 L16.5 41.6" fill="#fdfdfd" stroke="#6a6a6a" stroke-width="1.6" stroke-linejoin="round"/><rect x="5.2" y="21" width="11" height="23.8" fill="#a9d9b2" stroke="#3eb65f" stroke-width="1.6"/><rect x="8" y="23.5" width="5.4" height="19" fill="#bfe3c6"/><circle cx="10.6" cy="38.3" r="1.6" fill="#2ea44f"/></svg>
<div style="left:902.9px;top:445.3px;width:48.2px;height:52px;background:#fdfdfd;border:2px solid #d2d2d2;border-radius:9.5px;box-shadow:0 1px 1.5px rgba(0,0,0,0.08);"></div>
<svg style="left:902.9px;top:445.3px;" width="48.2" height="52" viewBox="0 0 48.2 52"><path d="M15.4 20.2 L15.4 19 C15.4 6.8 33.4 6.8 33.4 18.6 C33.4 26.5 23.9 26.2 23.9 34.6 L23.9 35.6" fill="none" stroke="#3482d2" stroke-width="8.6"/><path d="M15.4 19.2 L15.4 19 C15.4 6.8 33.4 6.8 33.4 18.6 C33.4 26.5 23.9 26.2 23.9 34.6" fill="none" stroke="#9dcef1" stroke-width="5.4"/><rect x="20" y="39" width="7.8" height="7" fill="#9dcef1" stroke="#3482d2" stroke-width="1.7"/></svg>
<div style="left:957.0999999999999px;top:445.3px;width:48.2px;height:52px;background:#fdfdfd;border:2px solid #d2d2d2;border-radius:9.5px;box-shadow:0 1px 1.5px rgba(0,0,0,0.08);"></div>
<svg style="left:957.0999999999999px;top:445.3px;" width="48.2" height="52" viewBox="0 0 48.2 52"><path d="M15.7 9.8 L34 9.8 C35 9.8 35.6 10.3 36 11.2 L43 26.6 C43.8 28.6 42.6 29.9 40.6 29.9 L29.2 29.9 L34.8 41.6 L31.2 45.2 L19.4 31 C18.4 29.9 17.2 29.3 15.7 29.1" fill="#fdfdfd" stroke="#6a6a6a" stroke-width="1.6" stroke-linejoin="round"/><rect x="4.8" y="9.6" width="11" height="22.6" fill="#f4adb0" stroke="#ee4b55" stroke-width="1.6"/><rect x="7.6" y="12" width="5.4" height="18" fill="#f8c3c5"/><circle cx="10.2" cy="27" r="1.6" fill="#e0232e"/></svg>
<div style="left:1896px;top:417px;width:192px;height:28.5px;background:#0f5fb4;border-radius:14.5px;border:1px solid #0b4f9a;"></div>
<span class="t" style="left:1908.50px;top:421.00px;font-size:20.5px;line-height:20.5px;color:#fff;letter-spacing:-0.188px;transform:scaleX(0.9783);transform-origin:0 0;">Masquer détails</span>
<div style="left:2057.5px;top:416px;width:31px;height:31px;background:#c8c8c8;border-radius:50%;border:1.5px solid #b0b0b0;"></div>
<div style="left:2011.5px;top:452.8px;width:36.6px;height:41px;background:#fdfdfd;border:2px solid #d2d2d2;border-radius:8px;box-shadow:0 1px 1.5px rgba(0,0,0,0.08);"></div>
<svg style="left:2011.5px;top:452.8px;" width="36.6" height="41" viewBox="0 0 36.6 41"><circle cx="16" cy="16" r="11" fill="#fdfdfd" stroke="#7c7c7c" stroke-width="1.6"/><path d="M24 24.2 L33.4 33.6" stroke="#7c7c7c" stroke-width="2"/><path d="M9.6 16 L22.4 16" stroke="#7fbdec" stroke-width="2.2"/><path d="M16 9.6 L16 22.4" stroke="#7fbdec" stroke-width="2.2"/></svg>
<div style="left:2051.9px;top:452.8px;width:36.6px;height:41px;background:#fdfdfd;border:2px solid #d2d2d2;border-radius:8px;box-shadow:0 1px 1.5px rgba(0,0,0,0.08);"></div>
<svg style="left:2051.9px;top:452.8px;" width="36.6" height="41" viewBox="0 0 36.6 41"><circle cx="16" cy="16" r="11" fill="#fdfdfd" stroke="#7c7c7c" stroke-width="1.6"/><path d="M24 24.2 L33.4 33.6" stroke="#7c7c7c" stroke-width="2"/><path d="M9.6 16 L22.4 16" stroke="#7fbdec" stroke-width="2.2"/></svg>
<div style="left:387px;top:544px;width:1015px;height:548px;background:#f8f8f8;border:2px solid #1e4a6e;border-bottom-width:3px;box-shadow:inset 0 0 0 2px #fffffc;"></div>
<div style="left:391px;top:592px;width:1px;height:495px;background:#fffffc;"></div>
<div style="left:1397px;top:592px;width:1px;height:495px;background:#fffffc;"></div>
<div style="left:390px;top:592px;width:1009px;height:3px;background:#fffffc;"></div>
<div style="left:389px;top:546px;width:1011px;height:46px;background:#2b579a;"></div>
<div style="left:389px;top:546px;width:1px;height:46px;background:#2f6cc4;"></div>
<div style="left:389px;top:592px;width:1px;height:497px;background:#6fa0e0;"></div>
<div style="left:1399px;top:546px;width:1px;height:46px;background:#2562b9;"></div>
<div style="left:1399px;top:592px;width:1px;height:497px;background:#8db4ea;"></div>
<div style="left:390px;top:590px;width:1009px;height:2px;background:#204d97;"></div>
<div style="left:387px;top:544px;width:1015px;height:3px;background:#1f486c;"></div>
<span class="t" style="left:400.80px;top:567.00px;font-size:17.5px;line-height:17.5px;color:#fff;letter-spacing:-0.117px;transform:scaleX(0.9820);transform-origin:0 0;-webkit-text-stroke:0.3px #fff;">Sélectionner un filtre (SEC021): Client</span>
<svg style="left:1362px;top:554px;" width="19" height="19" viewBox="0 0 19 19"><path d="M2.8 2.8 L16 16 M16 2.8 L2.8 16" stroke="#fff" stroke-width="1.7" fill="none"/></svg>
<span class="t" style="left:411.40px;top:612.00px;font-size:16.8px;line-height:16.8px;color:#5f5f5f;font-weight:bold;transform:scaleX(1.0804);transform-origin:0 0;-webkit-text-stroke:0.25px #5f5f5f;">Type de filtre</span>
<div style="left:528.5px;top:619.3px;width:149.0px;height:2px;background:#757575;"></div>
<span class="t" style="left:693.00px;top:612.00px;font-size:16.8px;line-height:16.8px;color:#5f5f5f;font-weight:bold;transform:scaleX(1.0364);transform-origin:0 0;-webkit-text-stroke:0.25px #5f5f5f;">Configuration</span>
<div style="left:812px;top:619.3px;width:567.5px;height:2px;background:#757575;"></div>
<div style="left:410.5px;top:635px;width:267.5px;height:243px;background:#fff;border:2px solid #9a9fa7;"></div>
<div style="left:414px;top:657.5px;width:261px;height:19px;background:#0078d7;"></div>
<span class="t" style="left:416.40px;top:640.00px;font-size:16.5px;line-height:16.5px;color:#000;">Aucun filtre</span>
<span class="t" style="left:416.00px;top:660.00px;font-size:16.5px;line-height:16.5px;color:#fff;letter-spacing:-0.082px;transform:scaleX(0.9875);transform-origin:0 0;">Inclure items cochés</span>
<span class="t" style="left:416.00px;top:679.00px;font-size:16.5px;line-height:16.5px;color:#000;letter-spacing:-0.155px;transform:scaleX(0.9775);transform-origin:0 0;">Exclure items cochés</span>
<div style="left:693px;top:635px;width:687px;height:348px;background:#fdfdfd;border:1.5px solid #cfcfcf;"></div>
<div style="left:696px;top:638px;width:681px;height:35px;background:#f8f8f8;border:1px solid #d6d6d6;border-bottom:none;"></div>
<div style="left:696px;top:672.5px;width:681px;height:2px;background:#c9c9c9;"></div>
<span class="t" style="left:701.40px;top:648.00px;font-size:16.5px;line-height:16.5px;color:#333;letter-spacing:-0.289px;transform:scaleX(0.9608);transform-origin:0 0;">Choix item</span>
<div style="left:696px;top:711px;width:681px;height:1px;background:#e8e8e8;"></div>
<div style="left:696px;top:748px;width:681px;height:1px;background:#e8e8e8;"></div>
<div style="left:696px;top:787px;width:681px;height:1px;background:#e8e8e8;"></div>
<div style="left:696px;top:825px;width:681px;height:1px;background:#e8e8e8;"></div>
<div style="left:696px;top:863px;width:681px;height:1px;background:#e8e8e8;"></div>
<div style="left:696px;top:900px;width:681px;height:1px;background:#e8e8e8;"></div>
<div style="left:696px;top:938px;width:681px;height:1px;background:#e8e8e8;"></div>
<div style="left:703.4px;top:683px;width:16.8px;height:16.8px;background:#fff;border:2px solid #a3a3a3;border-radius:4px;"></div>
<svg style="left:703.4px;top:683px;" width="16.8" height="16.8" viewBox="0 0 19 19"><path d="M3.8 9.2 L7.6 13.9 L15.2 5.4" fill="none" stroke="#5a5a5a" stroke-width="2.0"/></svg>
<svg style="left:727.6px;top:678.3px;" width="28.9" height="28.9" viewBox="0 0 34 34"><rect x="1" y="1" width="30" height="30" rx="1.2" fill="#fdfdfd" stroke="#747474" stroke-width="2"/><path d="M8.20 5.50 L8.99 7.31 L10.96 7.50 L9.48 8.82 L9.90 10.75 L8.20 9.75 L6.50 10.75 L6.92 8.82 L5.44 7.50 L7.41 7.31 Z" fill="#f0813a" stroke="#f0813a" stroke-width="0.6" stroke-linejoin="round"/><rect x="13.6" y="7.1" width="14.2" height="2.1" fill="#52a7e3"/><path d="M8.20 13.90 L8.99 15.71 L10.96 15.90 L9.48 17.22 L9.90 19.15 L8.20 18.15 L6.50 19.15 L6.92 17.22 L5.44 15.90 L7.41 15.71 Z" fill="#f0813a" stroke="#f0813a" stroke-width="0.6" stroke-linejoin="round"/><rect x="13.6" y="15.500000000000002" width="14.2" height="2.1" fill="#52a7e3"/><path d="M8.20 22.30 L8.99 24.11 L10.96 24.30 L9.48 25.62 L9.90 27.55 L8.20 26.55 L6.50 27.55 L6.92 25.62 L5.44 24.30 L7.41 24.11 Z" fill="#f0813a" stroke="#f0813a" stroke-width="0.6" stroke-linejoin="round"/><rect x="13.6" y="23.9" width="14.2" height="2.1" fill="#52a7e3"/><circle cx="23" cy="15.8" r="5.7" fill="#a9d9b2" stroke="#3eb65f" stroke-width="1.7"/><path d="M12.6 33.2 C12.8 26 17 22.2 23 22.2 C29 22.2 33.2 26 33.4 33.2 Z" fill="#a9d9b2" stroke="#3eb65f" stroke-width="1.7"/></svg>
<div style="left:703.4px;top:720.6px;width:16.8px;height:16.8px;background:#fff;border:2px solid #a3a3a3;border-radius:4px;"></div>
<svg style="left:727.6px;top:716.1px;" width="28.9" height="28.9" viewBox="0 0 34 34"><rect x="1" y="1" width="30" height="30" rx="1.2" fill="#fdfdfd" stroke="#747474" stroke-width="2"/><path d="M8.20 5.50 L8.99 7.31 L10.96 7.50 L9.48 8.82 L9.90 10.75 L8.20 9.75 L6.50 10.75 L6.92 8.82 L5.44 7.50 L7.41 7.31 Z" fill="#f0813a" stroke="#f0813a" stroke-width="0.6" stroke-linejoin="round"/><rect x="13.6" y="7.1" width="14.2" height="2.1" fill="#52a7e3"/><path d="M8.20 13.90 L8.99 15.71 L10.96 15.90 L9.48 17.22 L9.90 19.15 L8.20 18.15 L6.50 19.15 L6.92 17.22 L5.44 15.90 L7.41 15.71 Z" fill="#f0813a" stroke="#f0813a" stroke-width="0.6" stroke-linejoin="round"/><rect x="13.6" y="15.500000000000002" width="14.2" height="2.1" fill="#52a7e3"/><path d="M8.20 22.30 L8.99 24.11 L10.96 24.30 L9.48 25.62 L9.90 27.55 L8.20 26.55 L6.50 27.55 L6.92 25.62 L5.44 24.30 L7.41 24.11 Z" fill="#f0813a" stroke="#f0813a" stroke-width="0.6" stroke-linejoin="round"/><rect x="13.6" y="23.9" width="14.2" height="2.1" fill="#52a7e3"/><circle cx="23" cy="15.8" r="5.7" fill="#f3a9ac" stroke="#ee4b55" stroke-width="1.7"/><path d="M12.6 33.2 C12.8 26 17 22.2 23 22.2 C29 22.2 33.2 26 33.4 33.2 Z" fill="#f3a9ac" stroke="#ee4b55" stroke-width="1.7"/></svg>
<div style="left:696px;top:954.5px;width:681px;height:27px;background:#f0f0f0;"></div>
<svg style="left:704.5px;top:960px;" width="10" height="14" viewBox="0 0 10 14"><path d="M9 0.5 L9 13.5 L0.8 7 Z" fill="#606060"/></svg>
<div style="left:721.6px;top:960.5px;width:566.4px;height:13.3px;background:#cdcdcd;border-radius:7px;"></div>
<svg style="left:1359px;top:960px;" width="10" height="14" viewBox="0 0 10 14"><path d="M1 0.5 L1 13.5 L9.2 7 Z" fill="#606060"/></svg>
<span class="t" style="left:748.90px;top:1039.00px;font-size:17.3px;line-height:17.3px;color:#444;letter-spacing:-0.206px;transform:scaleX(0.9701);transform-origin:0 0;">Figer cette colonne</span>
<div style="left:902px;top:1035px;width:52.5px;height:23px;background:#efefef;border:1.3px solid #d4d4d4;border-radius:12px;"></div>
<div style="left:901.5px;top:1035px;width:23px;height:23px;background:#c9c9c9;border:1.3px solid #b4b4b4;border-radius:50%;"></div>
<div style="left:972px;top:1001px;width:189px;height:59px;background:#2b579a;border-radius:5px;"></div>
<span class="t" style="left:1032.90px;top:1023.00px;font-size:18.5px;line-height:18.5px;color:#fff;letter-spacing:-0.655px;transform:scaleX(0.9185);transform-origin:0 0;">Actualiser</span>
<div style="left:1178px;top:1000px;width:201.5px;height:61px;background:#fdfdfd;border:1.5px solid #d3d3d3;border-radius:6px;"></div>
<span class="t" style="left:1212.40px;top:1023.00px;font-size:18.5px;line-height:18.5px;color:#333;letter-spacing:-0.588px;transform:scaleX(0.9256);transform-origin:0 0;">Ne pas actualiser</span>
<svg style="left:0px;top:0px;pointer-events:none;" width="2106" height="1093" viewBox="0 0 2106 1093"><path d="M293.1 149.4 L472.0 545.3" stroke="#1c4a6e" stroke-width="4.1" fill="none"/><path d="M476.3 554.8 L465.5 546.1 L476.8 540.9 Z" fill="#1f4a6c"/></svg>
<svg style="left:69.05px;top:49.25px;" width="66.1" height="66.1" viewBox="0 0 66.1 66.1"><circle cx="33.05" cy="33.05" r="29.150000000000002" fill="#4094b5" stroke="#1b4a6c" stroke-width="3.8"/></svg>
<span class="t" style="left:91.12px;top:67.00px;font-size:39.5px;line-height:39.5px;color:#fff;font-weight:bold;">2</span>
<svg style="left:202.85px;top:47.05px;" width="66.1" height="66.1" viewBox="0 0 66.1 66.1"><circle cx="33.05" cy="33.05" r="29.150000000000002" fill="#4094b5" stroke="#1b4a6c" stroke-width="3.8"/></svg>
<span class="t" style="left:224.92px;top:65.00px;font-size:39.5px;line-height:39.5px;color:#fff;font-weight:bold;">3</span>
<svg style="left:273.25px;top:47.05px;" width="66.1" height="66.1" viewBox="0 0 66.1 66.1"><circle cx="33.05" cy="33.05" r="29.150000000000002" fill="#4094b5" stroke="#1b4a6c" stroke-width="3.8"/></svg>
<span class="t" style="left:295.32px;top:65.00px;font-size:39.5px;line-height:39.5px;color:#fff;font-weight:bold;">5</span>
<svg style="left:1192.05px;top:39.85000000000001px;" width="66.1" height="66.1" viewBox="0 0 66.1 66.1"><circle cx="33.05" cy="33.05" r="29.150000000000002" fill="#4094b5" stroke="#1b4a6c" stroke-width="3.8"/></svg>
<span class="t" style="left:1214.12px;top:58.00px;font-size:39.5px;line-height:39.5px;color:#fff;font-weight:bold;">6</span>
<svg style="left:1303.8500000000001px;top:39.85000000000001px;" width="66.1" height="66.1" viewBox="0 0 66.1 66.1"><circle cx="33.05" cy="33.05" r="29.150000000000002" fill="#4094b5" stroke="#1b4a6c" stroke-width="3.8"/></svg>
<span class="t" style="left:1325.92px;top:58.00px;font-size:39.5px;line-height:39.5px;color:#fff;font-weight:bold;">7</span>
<svg style="left:198.54999999999998px;top:430.55px;" width="66.1" height="66.1" viewBox="0 0 66.1 66.1"><circle cx="33.05" cy="33.05" r="29.150000000000002" fill="#4094b5" stroke="#1b4a6c" stroke-width="3.8"/></svg>
<span class="t" style="left:220.62px;top:449.00px;font-size:39.5px;line-height:39.5px;color:#fff;font-weight:bold;">4</span>
<svg style="left:665.25px;top:780.95px;" width="66.1" height="66.1" viewBox="0 0 66.1 66.1"><circle cx="33.05" cy="33.05" r="29.150000000000002" fill="#4094b5" stroke="#1b4a6c" stroke-width="3.8"/><path d="M38.15 23.65 L38.15 50.949999999999996 L31.549999999999997 50.949999999999996 L31.549999999999997 30.049999999999997 L26.65 31.949999999999996 L25.349999999999998 27.749999999999996 L32.75 23.65 Z" fill="#fff"/></svg>
</body></html>
